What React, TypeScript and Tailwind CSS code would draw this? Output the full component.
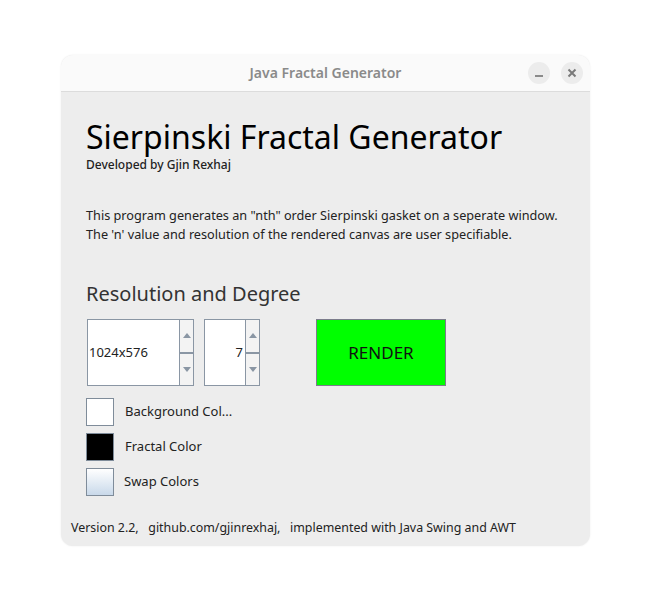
import React from "react";

function Spinner({ value, textW, align }: { value: string; textW: number; align: "left" | "right" }) {
  return (
    <div className="flex h-[67px]">
      <div
        className={`flex items-center bg-white border border-r-0 border-[#8a96a4] text-[13px] text-[#222] ${align === "right" ? "justify-end pr-[2px]" : "justify-start pl-[1px]"}`}
        style={{ width: textW }}
      >
        {value}
      </div>
      <div className="flex flex-col w-[15px] border border-[#8a96a4] bg-[#f3f3f3]">
        <div className="flex-1 flex items-center justify-center border-b-2 border-[#8a96a4]">
          <svg width="8" height="5" viewBox="0 0 8 5"><path d="M0 5 L4 0 L8 5 Z" fill="#8a96a4" /></svg>
        </div>
        <div className="flex-1 flex items-center justify-center">
          <svg width="8" height="5" viewBox="0 0 8 5"><path d="M0 0 L4 5 L8 0 Z" fill="#8a96a4" /></svg>
        </div>
      </div>
    </div>
  );
}

export default function App() {
  return (
    <div className="w-[651px] h-[614px] bg-white pt-[55px] pl-[61px]" style={{ fontFamily: '"Noto Sans", sans-serif' }}>
      <div className="w-[529px] h-[491px] rounded-[12px] bg-[#ededed] overflow-hidden flex flex-col shadow-[0_0_2px_rgba(0,0,0,0.08)]">
        <div className="h-[37px] bg-[#fafafa] border-b border-[#dcdcdc] flex items-center relative">
          <div className="flex-1 text-center text-[14px] font-semibold text-[#8a8a8a] mt-[-2px]">Java Fractal Generator</div>
          <div className="absolute right-[7px] top-[7px] flex gap-[11px]">
            <div className="w-[22px] h-[22px] rounded-full bg-[#ececec] flex items-center justify-center">
              <div className="w-[8px] h-[2px] bg-[#8a8a8a] mt-[5px]" />
            </div>
            <div className="w-[22px] h-[22px] rounded-full bg-[#ececec] flex items-center justify-center">
              <svg width="10" height="10" viewBox="0 0 10 10"><path d="M1.5 1.5 L8.5 8.5 M8.5 1.5 L1.5 8.5" stroke="#7a7a7a" strokeWidth="2" /></svg>
            </div>
          </div>
        </div>
        <div className="flex-1 flex flex-col pl-[25px] pt-[27px]">
          <div className="text-[32px] leading-[36px] text-black">Sierpinski Fractal Generator</div>
          <div className="text-[12px] font-medium leading-[16px] text-[#222] mt-[2px]">Developed by Gjin Rexhaj</div>
          <div className="mt-[33px] text-[12.7px] leading-[19px] text-[#222]">
            <div>This program generates an "nth" order Sierpinski gasket on a seperate window.</div>
            <div>The 'n' value and resolution of the rendered canvas are user specifiable.</div>
          </div>
          <div className="mt-[36px] text-[20px] leading-[28px] text-[#333]">Resolution and Degree</div>
          <div className="mt-[11px] flex items-start">
            <div className="ml-[1px]"><Spinner value="1024x576" textW={92} align="left" /></div>
            <div className="ml-[10px]"><Spinner value="7" textW={41} align="right" /></div>
            <div className="ml-[56px] w-[130px] h-[67px] bg-[#00ff00] border border-[#7c7c8c] flex items-center justify-center text-[17px] text-[#111]">RENDER</div>
          </div>
          <div className="mt-[12px] flex flex-col gap-[7px]">
            <div className="flex items-center">
              <div className="w-[28px] h-[28px] bg-white border border-[#7f8c9a]" />
              <div className="ml-[11px] text-[13px] text-[#222]">Background Col...</div>
            </div>
            <div className="flex items-center">
              <div className="w-[28px] h-[28px] bg-black border border-[#7f8c9a]" />
              <div className="ml-[11px] text-[13px] text-[#222]">Fractal Color</div>
            </div>
            <div className="flex items-center">
              <div className="w-[28px] h-[28px] border border-[#7f8c9a] bg-gradient-to-b from-white to-[#c9d9ea]" />
              <div className="ml-[10px] text-[13px] text-[#222]">Swap Colors</div>
            </div>
          </div>
          <div className="mt-[23px] ml-[-15px] text-[12.4px] text-[#222] whitespace-pre">Version 2.2,   github.com/gjinrexhaj,   implemented with Java Swing and AWT</div>
        </div>
      </div>
    </div>
  );
}
